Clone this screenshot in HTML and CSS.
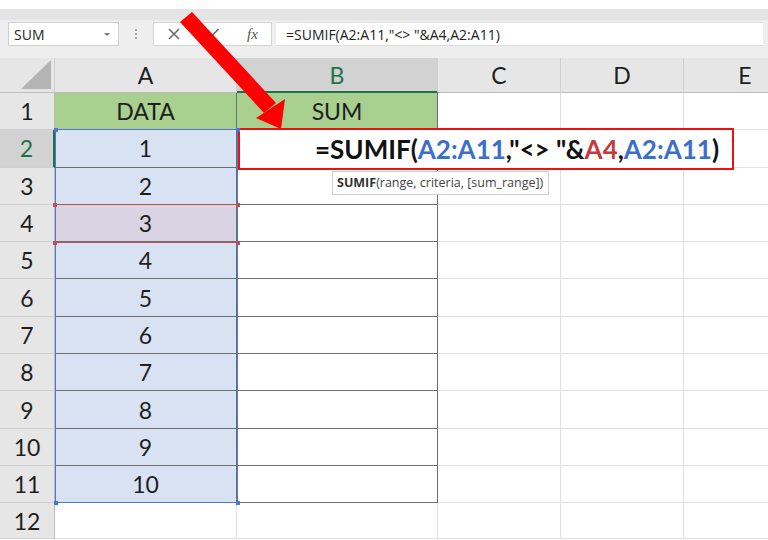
FILE: index.html
```html
<!DOCTYPE html>
<html lang="en">
<head>
  <meta charset="UTF-8">
  <meta name="viewport" content="width=device-width, initial-scale=1.0">
  <title>SUMIF not equal</title>
  <link rel="stylesheet" href="styles.css">
</head>
<body>
  <div class="topstrip"></div>

  <div class="toolbar">
    <div class="namebox">
      <span>SUM</span>
      <span class="caret"></span>
    </div>
    <div class="grip"><i></i><i></i><i></i></div>
    <div class="fxbox">
      <svg class="tool-icon" width="14" height="14" viewBox="0 0 14 14">
        <path d="M2 2 L12 12 M12 2 L2 12" stroke="#6d6d6d" stroke-width="1.6" fill="none"/>
      </svg>
      <svg class="tool-icon" width="16" height="14" viewBox="0 0 16 14">
        <path d="M1.5 7.5 L5.5 11.5 L14.5 2" stroke="#6d6d6d" stroke-width="1.6" fill="none"/>
      </svg>
      <span class="fx">fx</span>
    </div>
    <div class="formula-input">=SUMIF(A2:A11,"&lt;&gt; "&amp;A4,A2:A11)</div>
  </div>

  <div class="sheet-wrap">
    <div class="sheet">
      <!-- column headers -->
      <div class="corner"><span class="corner-tri"></span></div>
      <div class="hd">A</div>
      <div class="hd hd-sel">B</div>
      <div class="hd">C</div>
      <div class="hd">D</div>
      <div class="hd">E</div>

      <div class="rh">1</div>
      <div class="c t green">DATA</div>
      <div class="c t green">SUM</div>
      <div class="c"></div><div class="c"></div><div class="c"></div>

      <div class="rh rh-sel">2</div>
      <div class="c t blue">1</div>
      <div class="c t"></div>
      <div class="c"></div><div class="c"></div><div class="c"></div>

      <div class="rh">3</div>
      <div class="c t blue">2</div>
      <div class="c t"></div>
      <div class="c"></div><div class="c"></div><div class="c"></div>

      <div class="rh">4</div>
      <div class="c t purple">3</div>
      <div class="c t"></div>
      <div class="c"></div><div class="c"></div><div class="c"></div>

      <div class="rh">5</div>
      <div class="c t blue">4</div>
      <div class="c t"></div>
      <div class="c"></div><div class="c"></div><div class="c"></div>

      <div class="rh">6</div>
      <div class="c t blue">5</div>
      <div class="c t"></div>
      <div class="c"></div><div class="c"></div><div class="c"></div>

      <div class="rh">7</div>
      <div class="c t blue">6</div>
      <div class="c t"></div>
      <div class="c"></div><div class="c"></div><div class="c"></div>

      <div class="rh">8</div>
      <div class="c t blue">7</div>
      <div class="c t"></div>
      <div class="c"></div><div class="c"></div><div class="c"></div>

      <div class="rh">9</div>
      <div class="c t blue">8</div>
      <div class="c t"></div>
      <div class="c"></div><div class="c"></div><div class="c"></div>

      <div class="rh">10</div>
      <div class="c t blue">9</div>
      <div class="c t"></div>
      <div class="c"></div><div class="c"></div><div class="c"></div>

      <div class="rh">11</div>
      <div class="c t blue">10</div>
      <div class="c t"></div>
      <div class="c"></div><div class="c"></div><div class="c"></div>

      <div class="rh">12</div>
      <div class="c"></div><div class="c"></div>
      <div class="c"></div><div class="c"></div><div class="c"></div>
    </div>

    <!-- overlay layer: reference highlights, edited cell, tooltip -->
    <div class="sheet overlay">
      <div class="range range-blue">
        <i class="knob tl"></i><i class="knob tr"></i><i class="knob bl"></i><i class="knob br"></i>
      </div>
      <div class="range range-red">
        <i class="knob tl"></i><i class="knob tr"></i><i class="knob bl"></i><i class="knob br"></i>
      </div>
      <div class="edit-box">
        <span>=SUMIF(</span><span class="ref-blue">A2:A11</span><span>,"&lt;&gt; "&amp;</span><span class="ref-red">A4</span><span>,</span><span class="ref-blue">A2:A11</span><span>)</span>
      </div>
      <div class="tip"><b>SUMIF</b>(range, criteria, [sum_range])</div>
    </div>
  </div>

  <svg class="arrow" width="768" height="540" viewBox="0 0 768 540">
    <path d="M180 22 L192 12 L276 103 L264 113 Z" fill="#ff0000"/>
    <path d="M256 118 L285 99 L281 129 Z" fill="#ff0000"/>
  </svg>
</body>
</html>
```

FILE: styles.css
```css
body {
  margin: 0;
  width: 768px;
  height: 540px;
  overflow: hidden;
  background: #fff;
  font-family: Lato, "Open Sans", sans-serif;
  color: #1e1e1e;
  position: relative;
}

.topstrip {
  height: 9px;
  background: #fff;
}

.toolbar {
  height: 49px;
  box-sizing: border-box;
  padding: 13px 5px 12px 8px;
  display: flex;
  align-items: stretch;
  background: linear-gradient(#e4e4e4 0 11px, #eeeeee 11px);
}

.namebox {
  width: 111px;
  box-sizing: border-box;
  background: #fff;
  border: 1px solid #cfcfcf;
  display: flex;
  align-items: center;
  justify-content: space-between;
  padding: 0 8px 0 5px;
  font-family: "Open Sans", sans-serif;
  font-size: 14px;
  color: #262626;
}

.caret {
  width: 0;
  height: 0;
  border-left: 3px solid transparent;
  border-right: 3px solid transparent;
  border-top: 3px solid #7a7a7a;
}

.grip {
  width: 34px;
  display: flex;
  flex-direction: column;
  align-items: center;
  justify-content: center;
  gap: 2px;
}

.grip i {
  width: 2px;
  height: 2px;
  background: #a6a6a6;
}

.fxbox {
  width: 119px;
  box-sizing: border-box;
  background: #fff;
  border: 1px solid #d4d4d4;
  display: flex;
  align-items: center;
  padding: 0 12px 0 13px;
  gap: 23px;
}

.fx {
  font-family: "Liberation Serif", serif;
  font-style: italic;
  font-size: 15px;
  color: #555;
  margin-left: 4px;
}

.formula-input {
  flex: 1;
  margin-left: 4px;
  background: #fff;
  border-top: 1px solid #dcdcdc;
  border-bottom: 1px solid #dcdcdc;
  display: flex;
  align-items: center;
  padding-left: 10px;
  font-family: "Open Sans", sans-serif;
  font-size: 14px;
  color: #222;
}

.sheet-wrap {
  position: relative;
  overflow: hidden;
}

.sheet {
  display: grid;
  width: 807px;
  grid-template-columns: 55px 182px 201px 123px 123px 123px;
  grid-template-rows: 35px repeat(11, 37.3px) 36px;
}

.overlay {
  position: absolute;
  left: 0;
  top: 0;
  pointer-events: none;
}

.corner {
  background: #e6e6e6;
  border-right: 1px solid #cfcfcf;
  border-bottom: 1px solid #bdbdbd;
  display: flex;
  align-items: flex-end;
  justify-content: flex-end;
  padding: 0 3px 3px 0;
}

.corner-tri {
  width: 0;
  height: 0;
  border-left: 30px solid transparent;
  border-bottom: 29px solid #b4b4b4;
}

.hd {
  background: #e6e6e6;
  border-right: 1px solid #d0d0d0;
  border-bottom: 1px solid #bdbdbd;
  display: flex;
  align-items: center;
  justify-content: center;
  font-size: 23px;
  color: #1e1e1e;
}

.hd-sel {
  background: #d2d2d2;
  color: #217346;
  border-bottom: 2px solid #217346;
}

.rh {
  background: #e6e6e6;
  border-right: 1px solid #bdbdbd;
  border-bottom: 1px solid #d0d0d0;
  display: flex;
  align-items: center;
  justify-content: center;
  font-size: 23px;
}

.rh-sel {
  background: #d2d2d2;
  color: #217346;
  border-right: 2px solid #217346;
}

.c {
  border-right: 1px solid #e0e0e0;
  border-bottom: 1px solid #e0e0e0;
  display: flex;
  align-items: center;
  justify-content: center;
  font-size: 23px;
}

.c.t {
  border-right-color: #6e6e6e;
  border-bottom-color: #6e6e6e;
}

.green {
  background: #a9d08e;
}

.blue {
  background: #d9e2f3;
}

.purple {
  background: #d9d3e3;
}

.range {
  position: relative;
}

.range-blue {
  grid-column: 2;
  grid-row: 3 / 13;
  border: 1px solid #4a78d0;
  margin: -1px -1px 0 0;
}

.range-red {
  grid-column: 2;
  grid-row: 5;
  border-top: 1px solid #c0504d;
  border-bottom: 1px solid #c0504d;
  margin: -1px 0 -1px 0;
}

.knob {
  position: absolute;
  width: 4px;
  height: 4px;
  background: #4a78d0;
}

.range-red .knob {
  background: #c0504d;
}

.knob.tl { left: -2px; top: -2px; }
.knob.tr { right: -3px; top: -2px; }
.knob.bl { left: -2px; bottom: -3px; }
.knob.br { right: -3px; bottom: -3px; }

.edit-box {
  grid-column: 3 / 7;
  grid-row: 3;
  min-width: 0;
  margin: -2px 73px -2px 1px;
  border: 2px solid #ee1111;
  background: #fff;
  display: flex;
  align-items: center;
  padding-left: 75px;
  font-size: 26px;
  font-weight: 700;
  color: #111;
  white-space: nowrap;
}

.ref-blue {
  color: #3c6fcb;
}

.ref-red {
  color: #c8393e;
}

.tip {
  grid-column: 3 / 7;
  grid-row: 4;
  align-self: start;
  justify-self: start;
  margin: 3px 0 0 95px;
  padding: 2px 5px 3px 4px;
  background: #fff;
  border: 1px solid #cdcdcd;
  font-family: "Open Sans", sans-serif;
  font-size: 12.5px;
  color: #444;
  white-space: nowrap;
}

.tip b {
  color: #333;
}

.arrow {
  position: absolute;
  left: 0;
  top: 0;
  pointer-events: none;
}
```
